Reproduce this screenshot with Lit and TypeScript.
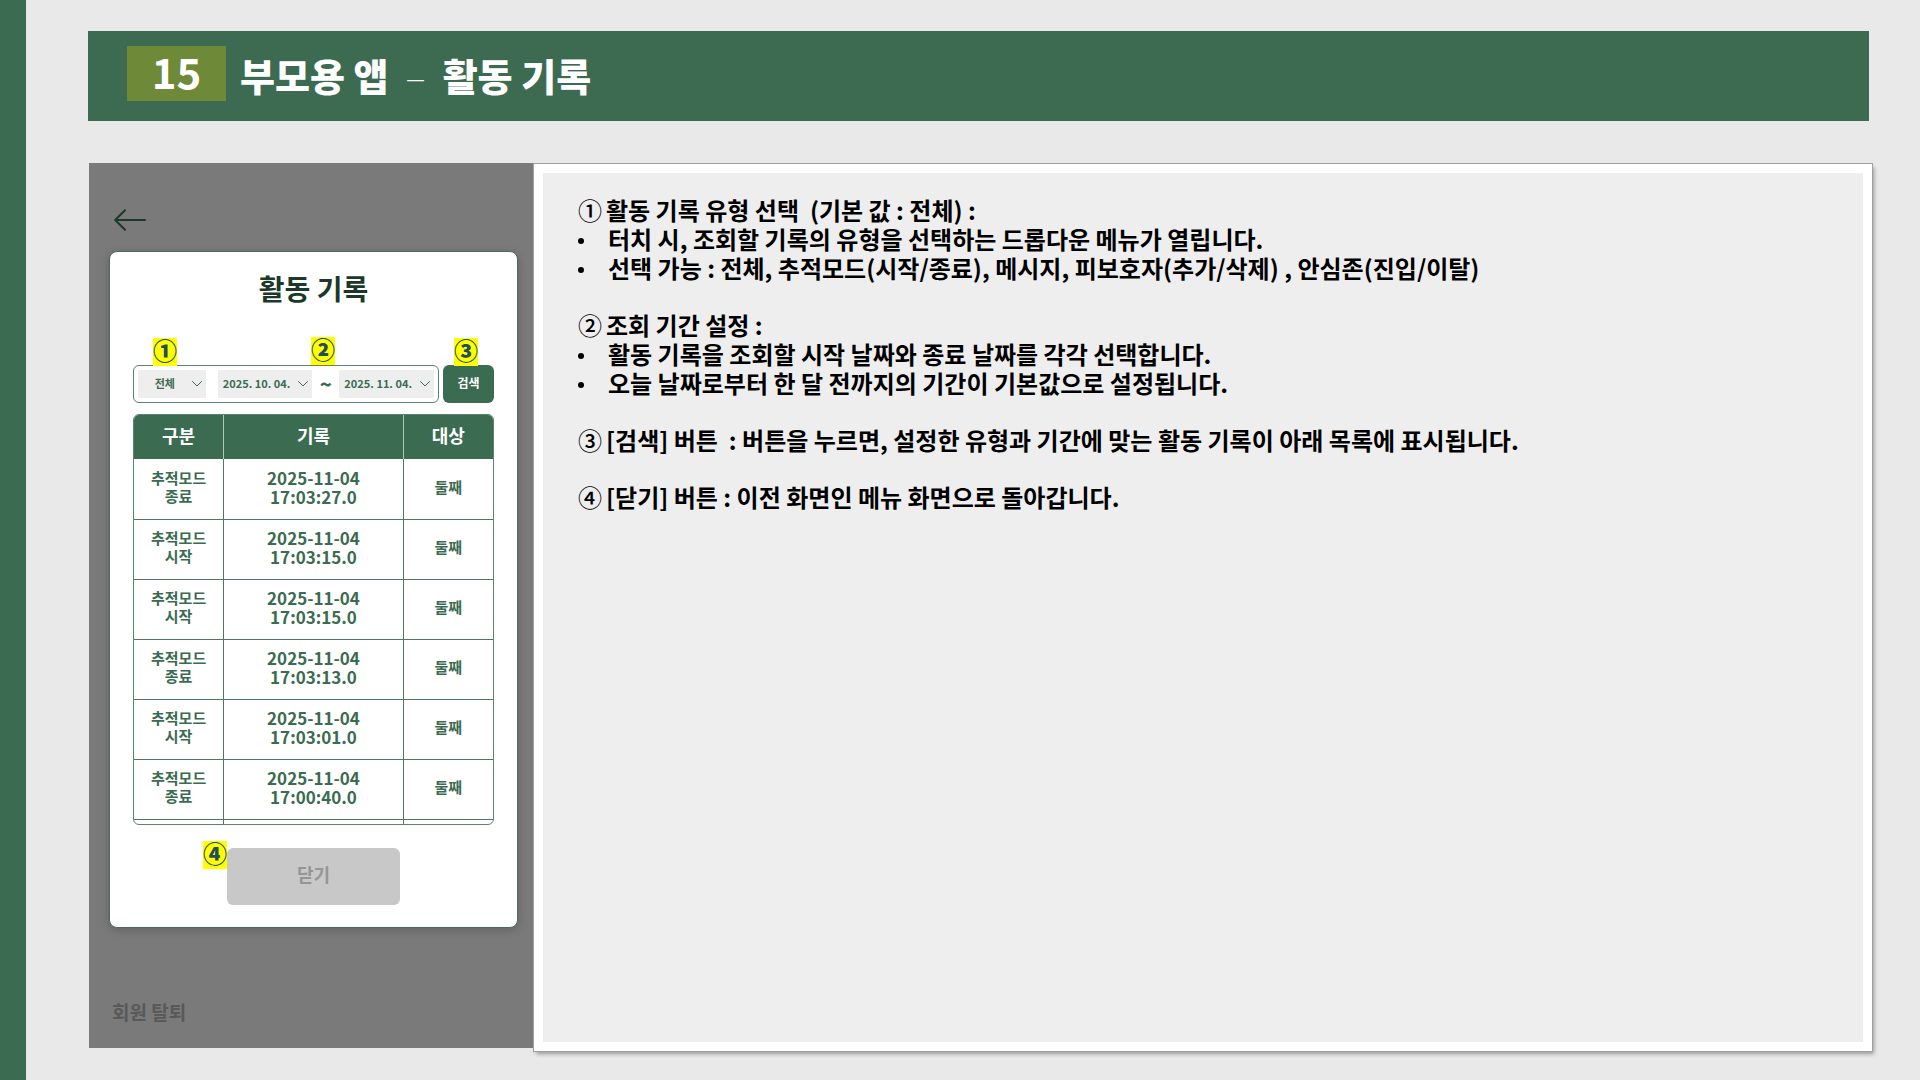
import { LitElement, html, css, svg } from "lit";
import { customElement } from "lit/decorators.js";

interface ActivityRecord {
  kind: [string, string];
  date: string;
  time: string;
  target: string;
}

interface Note {
  mark: string;
  heading: string;
  items: string[];
}

const RECORDS: ActivityRecord[] = [
  { kind: ["추적모드", "종료"], date: "2025-11-04", time: "17:03:27.0", target: "둘째" },
  { kind: ["추적모드", "시작"], date: "2025-11-04", time: "17:03:15.0", target: "둘째" },
  { kind: ["추적모드", "시작"], date: "2025-11-04", time: "17:03:15.0", target: "둘째" },
  { kind: ["추적모드", "종료"], date: "2025-11-04", time: "17:03:13.0", target: "둘째" },
  { kind: ["추적모드", "시작"], date: "2025-11-04", time: "17:03:01.0", target: "둘째" },
  { kind: ["추적모드", "종료"], date: "2025-11-04", time: "17:00:40.0", target: "둘째" },
];

const NOTES: Note[] = [
  {
    mark: "①",
    heading: "활동 기록 유형 선택  (기본 값 : 전체) :",
    items: [
      "터치 시, 조회할 기록의 유형을 선택하는 드롭다운 메뉴가 열립니다.",
      "선택 가능 : 전체, 추적모드(시작/종료), 메시지, 피보호자(추가/삭제) , 안심존(진입/이탈)",
    ],
  },
  {
    mark: "②",
    heading: "조회 기간 설정 :",
    items: [
      "활동 기록을 조회할 시작 날짜와 종료 날짜를 각각 선택합니다.",
      "오늘 날짜로부터 한 달 전까지의 기간이 기본값으로 설정됩니다.",
    ],
  },
  {
    mark: "③",
    heading: "[검색] 버튼  : 버튼을 누르면, 설정한 유형과 기간에 맞는 활동 기록이 아래 목록에 표시됩니다.",
    items: [],
  },
  { mark: "④", heading: "[닫기] 버튼 : 이전 화면인 메뉴 화면으로 돌아갑니다.", items: [] },
];

const chevron = html`<svg class="chevron" viewBox="0 0 10 6" aria-hidden="true">
  ${svg`<path d="M0.5 0.5 L5 5 L9.5 0.5" fill="none" stroke="#3b6b51" stroke-width="1" stroke-linecap="round" stroke-linejoin="round"/>`}
</svg>`;

@customElement("phone-screen")
export class PhoneScreen extends LitElement {
  static styles = css`
    :host {
      display: flex;
      flex-direction: column;
      box-sizing: border-box;
      padding: 46px 15px 22px 20px;
      background: #7a7a7a;
      color: #3b6b51;
      font-family: "Noto Sans CJK KR", "Noto Sans", sans-serif;
    }
    * {
      box-sizing: border-box;
    }
    button,
    select {
      font: inherit;
      border: 0;
      margin: 0;
    }
    .back {
      align-self: flex-start;
      display: block;
      padding: 0;
      margin-left: 5px;
      background: none;
    }
    .back svg {
      display: block;
      width: 32px;
      height: 22px;
    }
    .modal {
      display: flex;
      flex-direction: column;
      margin-top: 20px;
      padding: 16px 23px 22px;
      border: 1px solid #4a6a5a;
      border-radius: 8px;
      background: #fff;
      box-shadow: 0 2px 10px rgba(0, 0, 0, 0.2);
    }
    h2 {
      margin: 0;
      text-align: center;
      font-size: 28px;
      line-height: 40px;
      font-weight: 700;
      color: #1c382a;
    }
    .search {
      display: flex;
      gap: 4px;
      margin-top: 57px;
    }
    .marked {
      position: relative;
    }
    .filters {
      display: flex;
      flex: 1;
      align-items: center;
      height: 38px;
      padding: 0 4px;
      border: 1px solid #5c8270;
      border-radius: 6px;
    }
    .field {
      display: grid;
      align-items: center;
      background: #eee;
    }
    .field > * {
      grid-area: 1 / 1;
    }
    .kind {
      flex: 68;
      margin-right: 12px;
    }
    .day {
      flex: 95;
    }
    select {
      appearance: none;
      width: 100%;
      height: 28px;
      padding: 0 0 3px 5px;
      border-radius: 0;
      background: transparent;
      color: #3b6b51;
      font-size: 11px;
      font-weight: 700;
    }
    .kind select {
      padding: 0 14px 3px 0;
      text-align: center;
      text-align-last: center;
    }
    .chevron {
      justify-self: end;
      width: 10px;
      height: 6px;
      margin-right: 4px;
      pointer-events: none;
    }
    .tilde {
      width: 27px;
      text-align: center;
      font-size: 20px;
      line-height: 28px;
      font-weight: 900;
    }
    .go {
      width: 51px;
      height: 38px;
      padding: 0 0 3px;
      border-radius: 6px;
      background: #3b6b51;
      color: #fff;
      font-size: 12px;
      font-weight: 700;
    }
    .mark {
      position: absolute;
      padding: 0 0 4px;
      background: #ff0;
      color: #1f4e5f;
      font-size: 24px;
      line-height: 24px;
      font-weight: 900;
    }
    .mark.type {
      left: 19px;
      top: -28px;
    }
    .mark.period {
      left: 177px;
      top: -29px;
    }
    .mark.find {
      left: 11px;
      top: -27px;
    }
    .mark.exit {
      right: 100%;
      top: -7px;
    }
    .list {
      margin-top: 11px;
      border: 1px solid #5c8270;
      border-radius: 6px;
      overflow: hidden;
    }
    table {
      width: 100%;
      table-layout: fixed;
      border-collapse: collapse;
      text-align: center;
    }
    .narrow {
      width: 25%;
    }
    th,
    td {
      padding: 0;
      border-left: 1px solid #4f7862;
    }
    th {
      height: 44px;
      padding-bottom: 5px;
      border-color: #a9cbb8;
      background: #3b6b51;
      color: #fff;
      font-size: 18px;
      line-height: 24px;
      font-weight: 700;
    }
    th:first-child,
    td:first-child {
      border-left: 0;
    }
    td {
      height: 60px;
      padding-bottom: 4px;
      border-bottom: 1px solid #4f7862;
      font-size: 15px;
      line-height: 18px;
      font-weight: 700;
    }
    .when {
      font-size: 17px;
      line-height: 19px;
    }
    .line {
      display: block;
    }
    tfoot td {
      height: 5px;
      padding: 0;
      border-bottom: 0;
    }
    .footer {
      align-self: center;
      margin-top: 23px;
    }
    .close {
      display: block;
      width: 173px;
      height: 57px;
      padding: 0 0 6px;
      border-radius: 6px;
      background: #c8c8c8;
      color: #959595;
      font-size: 18px;
      font-weight: 700;
    }
    .leave {
      margin: auto 0 0 3px;
      align-self: flex-start;
      color: #595959;
      font-size: 19px;
      line-height: 28px;
      font-weight: 700;
      text-decoration: none;
    }
  `;

  private renderRow(r: ActivityRecord) {
    return html`<tr>
      <td>${r.kind.map((k) => html`<span class="line">${k}</span>`)}</td>
      <td class="when"><span class="line">${r.date}</span><span class="line">${r.time}</span></td>
      <td>${r.target}</td>
    </tr>`;
  }

  render() {
    return html`
      <button class="back" aria-label="뒤로">
        <svg viewBox="0 0 32 22" fill="none" stroke="#1c382a" stroke-width="2" stroke-linecap="round" stroke-linejoin="round">
          <path d="M31 11 H1.5 M11 1.2 L1.2 11 L11 20.8" />
        </svg>
      </button>
      <section class="modal">
        <h2>활동 기록</h2>
        <div class="search">
          <div class="filters marked">
            <div class="field kind">
              <select aria-label="유형"><option>전체</option></select>
              ${chevron}
            </div>
            <div class="field day">
              <select aria-label="시작 날짜"><option>2025. 10. 04.</option></select>
              ${chevron}
            </div>
            <span class="tilde">~</span>
            <div class="field day">
              <select aria-label="종료 날짜"><option>2025. 11. 04.</option></select>
              ${chevron}
            </div>
            <span class="mark type">①</span>
            <span class="mark period">②</span>
          </div>
          <div class="marked">
            <button class="go">검색</button>
            <span class="mark find">③</span>
          </div>
        </div>
        <div class="list">
          <table>
            <thead>
              <tr>
                <th class="narrow">구분</th>
                <th>기록</th>
                <th class="narrow">대상</th>
              </tr>
            </thead>
            <tbody>
              ${RECORDS.map((r) => this.renderRow(r))}
            </tbody>
            <tfoot>
              <tr><td></td><td></td><td></td></tr>
            </tfoot>
          </table>
        </div>
        <div class="footer marked">
          <button class="close">닫기</button>
          <span class="mark exit">④</span>
        </div>
      </section>
      <a class="leave" href="#">회원 탈퇴</a>
    `;
  }
}

@customElement("screen-notes")
export class ScreenNotes extends LitElement {
  static styles = css`
    :host {
      display: block;
      box-sizing: border-box;
      padding: 22px 30px 24px 35px;
      border: 9px solid #fff;
      background: #eee;
      box-shadow: 0 0 0 1px #a0a0a0, 2px 3px 4px rgba(0, 0, 0, 0.35);
      color: #000;
      font-family: "Noto Sans CJK KR", "Noto Sans", sans-serif;
      font-size: 24px;
      line-height: 29px;
      font-weight: 700;
    }
    section + section {
      margin-top: 28px;
    }
    h3 {
      display: flex;
      gap: 4px;
      margin: 0;
      font: inherit;
      white-space: pre-wrap;
    }
    .mark {
      font-weight: 500;
    }
    ul {
      margin: 0;
      padding: 0;
      list-style: none;
    }
    li {
      display: flex;
    }
    li::before {
      content: "";
      flex: none;
      width: 6px;
      height: 6px;
      margin: 14px 24px 0 0;
      border-radius: 50%;
      background: #000;
    }
  `;

  render() {
    return NOTES.map(
      (n) => html`<section>
        <h3><span class="mark">${n.mark}</span><span>${n.heading}</span></h3>
        ${n.items.length ? html`<ul>${n.items.map((i) => html`<li>${i}</li>`)}</ul>` : null}
      </section>`
    );
  }
}

@customElement("app-root")
export class AppRoot extends LitElement {
  static styles = css`
    :host {
      display: flex;
      box-sizing: border-box;
      min-height: 100vh;
      padding: 31px 47px 29px 62px;
      border-left: 26px solid #3b6b51;
      background: #e9e9e9;
      font-family: "Noto Sans CJK KR", "Noto Sans", sans-serif;
    }
    .page {
      flex: 1;
      display: flex;
      flex-direction: column;
      gap: 42px;
      min-width: 0;
    }
    header {
      display: flex;
      align-items: flex-start;
      gap: 14px;
      margin-right: 4px;
      padding: 15px 39px;
      background: #3c6b52;
      color: #fff;
    }
    .number {
      width: 99px;
      padding-bottom: 5px;
      background: #6e8a38;
      text-align: center;
      font-size: 42px;
      line-height: 50px;
      font-weight: 700;
    }
    h1 {
      display: flex;
      gap: 17px;
      margin: 0;
      font-size: 38px;
      line-height: 58px;
      padding-bottom: 2px;
      font-weight: 900;
    }
    .dash {
      font-weight: 100;
    }
    main {
      flex: 1;
      display: grid;
      grid-template-columns: 444px minmax(0, 1fr);
      margin-left: 1px;
    }
    phone-screen {
      margin-bottom: 3px;
    }
    screen-notes {
      margin: 1px 1px 0 1px;
    }
  `;

  render() {
    return html`
      <div class="page">
        <header>
          <span class="number">15</span>
          <h1><span>부모용 앱</span><span class="dash">–</span><span>활동 기록</span></h1>
        </header>
        <main>
          <phone-screen></phone-screen>
          <screen-notes></screen-notes>
        </main>
      </div>
    `;
  }
}
